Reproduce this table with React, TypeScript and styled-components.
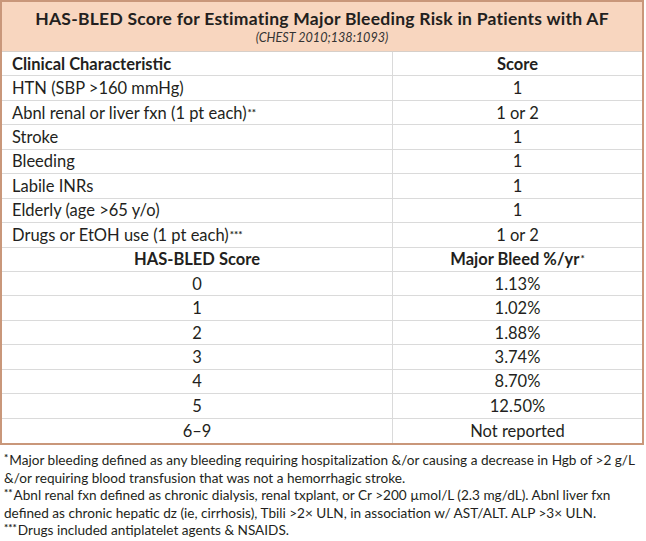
import styled, { createGlobalStyle } from "styled-components";

const GlobalStyle = createGlobalStyle`
  html, body {
    margin: 0;
    padding: 0;
    background: #ffffff;
  }
  body {
    font-family: "Lato", "Open Sans", sans-serif;
    color: #231f20;
  }
`;

interface Row {
  label: string;
  value: string;
  mark?: string;
}

const characteristics: Row[] = [
  { label: "HTN (SBP >160 mmHg)", value: "1" },
  { label: "Abnl renal or liver fxn (1 pt each)", value: "1 or 2", mark: "**" },
  { label: "Stroke", value: "1" },
  { label: "Bleeding", value: "1" },
  { label: "Labile INRs", value: "1" },
  { label: "Elderly (age >65 y/o)", value: "1" },
  { label: "Drugs or EtOH use (1 pt each)", value: "1 or 2", mark: "***" },
];

const bleedRates: Row[] = [
  { label: "0", value: "1.13%" },
  { label: "1", value: "1.02%" },
  { label: "2", value: "1.88%" },
  { label: "3", value: "3.74%" },
  { label: "4", value: "8.70%" },
  { label: "5", value: "12.50%" },
  { label: "6–9", value: "Not reported" },
];

// each footnote as printed, one entry per line
const footnotes: { mark: string; lines: string[] }[] = [
  {
    mark: "*",
    lines: [
      "Major bleeding defined as any bleeding requiring hospitalization &/or causing a decrease in Hgb of >2 g/L",
      "&/or requiring blood transfusion that was not a hemorrhagic stroke.",
    ],
  },
  {
    mark: "**",
    lines: [
      "Abnl renal fxn defined as chronic dialysis, renal txplant, or Cr >200 µmol/L (2.3 mg/dL). Abnl liver fxn",
      "defined as chronic hepatic dz (ie, cirrhosis), Tbili >2× ULN, in association w/ AST/ALT. ALP >3× ULN.",
    ],
  },
  {
    mark: "***",
    lines: ["Drugs included antiplatelet agents & NSAIDS."],
  },
];

const App = () => {
  return (
    <Page>
      <GlobalStyle />
      <Table>
        <Header>
          <Title>HAS-BLED Score for Estimating Major Bleeding Risk in Patients with AF</Title>
          <Source>(CHEST 2010;138:1093)</Source>
        </Header>
        <Body>
          <Cell $bold>Clinical Characteristic</Cell>
          <Cell $bold $center $right>Score</Cell>
          {characteristics.map((row) => (
            <RowPair key={row.label}>
              <Cell>
                {row.label}
                {row.mark && <Mark>{row.mark}</Mark>}
              </Cell>
              <Cell $center $right>{row.value}</Cell>
            </RowPair>
          ))}
          <Cell $bold $center>HAS-BLED Score</Cell>
          <Cell $bold $center $right>
            Major Bleed %/yr<Mark>*</Mark>
          </Cell>
          {bleedRates.map((row, i) => (
            <RowPair key={row.label}>
              <Cell $center $last={i === bleedRates.length - 1}>{row.label}</Cell>
              <Cell $center $right $last={i === bleedRates.length - 1}>{row.value}</Cell>
            </RowPair>
          ))}
        </Body>
      </Table>
      <Notes>
        {footnotes.map((note) =>
          note.lines.map((line, i) => (
            <NoteLine key={line}>
              {i === 0 && <NoteMark>{note.mark}</NoteMark>}
              <span>{line}</span>
            </NoteLine>
          ))
        )}
      </Notes>
    </Page>
  );
};

export default App;

const Page = styled.div`
  width: 646px;
  height: 541px;
  overflow: hidden;
`;

const Table = styled.div`
  width: 644px;
  box-sizing: border-box;
  border: 2px solid #c9977a;
`;

const Header = styled.div`
  height: 50px;
  box-sizing: border-box;
  background: #f8d6bf;
  border-bottom: 1px solid #d6cfc9;
  display: flex;
  flex-direction: column;
  align-items: center;
  padding-top: 6px;
`;

const Title = styled.div`
  font-size: 17.5px;
  font-weight: 700;
  letter-spacing: 0.25px;
  line-height: 22px;
`;

const Source = styled.div`
  font-size: 12.6px;
  font-style: italic;
  line-height: 16px;
  color: #333;
`;

const Body = styled.div`
  display: grid;
  grid-template-columns: 390px 1fr;
  grid-auto-rows: 24.44px;
`;

const RowPair = styled.div`
  display: contents;
`;

const Cell = styled.div<{ $bold?: boolean; $center?: boolean; $right?: boolean; $last?: boolean }>`
  box-sizing: border-box;
  display: flex;
  align-items: center;
  justify-content: ${(p) => (p.$center ? "center" : "flex-start")};
  padding: 0 10px;
  font-size: 16.5px;
  font-weight: ${(p) => (p.$bold ? 700 : 400)};
  white-space: nowrap;
  border-bottom: ${(p) => (p.$last ? "none" : "1px solid #dadada")};
  border-left: ${(p) => (p.$right ? "1px solid #dadada" : "none")};
`;

const Mark = styled.sup`
  font-size: 10px;
  font-weight: 700;
  vertical-align: top;
  line-height: 1;
  position: relative;
  top: -1px;
  margin-left: 1px;
`;

const Notes = styled.div`
  padding: 7px 2px 0 4px;
`;

const NoteLine = styled.div`
  display: flex;
  align-items: flex-start;
  font-size: 13.6px;
  line-height: 17.6px;
  white-space: nowrap;
`;

const NoteMark = styled.span`
  font-size: 10px;
  font-weight: 700;
  line-height: 11px;
  margin-right: 1px;
`;
